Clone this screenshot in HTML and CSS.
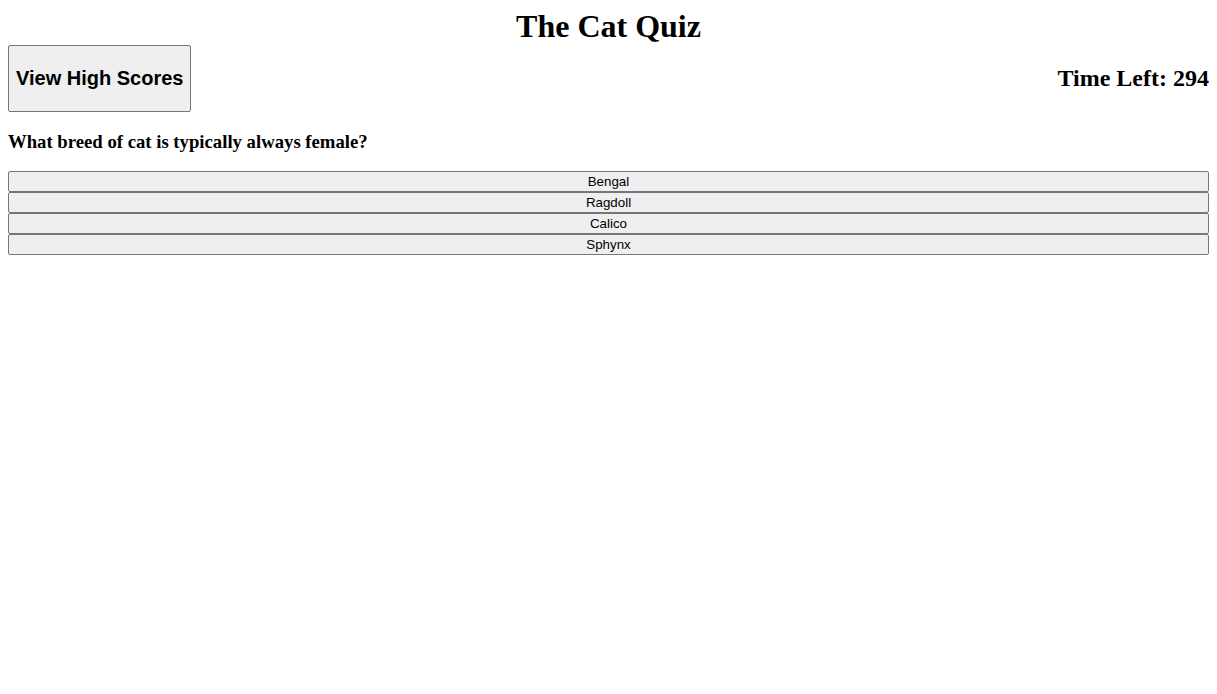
FILE: index.html
```html
<!DOCTYPE html>
<html lang="en">
<head>
<meta charset="utf-8">
<title>The Cat Quiz</title>
<link rel="stylesheet" href="styles.css">
</head>
<body>
<h1 class="title">The Cat Quiz</h1>
<div class="topbar">
  <button class="scores-btn" type="button">View High Scores</button>
  <h2 class="timer">Time Left: 294</h2>
</div>
<h3 class="question">What breed of cat is typically always female?</h3>
<div class="answers">
  <button class="answer" type="button">Bengal</button>
  <button class="answer" type="button">Ragdoll</button>
  <button class="answer" type="button">Calico</button>
  <button class="answer" type="button">Sphynx</button>
</div>
</body>
</html>
```

FILE: styles.css
```css
html, body {
  background: #ffffff;
}
body {
  margin: 8px;
  font-family: "Liberation Serif", "Times New Roman", serif;
  color: #000;
}
.title {
  margin: 0;
  font-size: 32px;
  font-weight: bold;
  text-align: center;
  line-height: 37px;
}
.topbar {
  display: flex;
  justify-content: space-between;
  align-items: center;
}
.scores-btn {
  font-family: "Liberation Sans", Arial, sans-serif;
  font-size: 20px;
  font-weight: bold;
  line-height: 23px;
  color: #000;
  background: #efefef;
  border: 1px solid #767676;
  border-radius: 2px;
  padding: 21px 7px;
  margin: 0;
}
.timer {
  margin: 0;
  font-size: 24px;
  font-weight: bold;
}
.question {
  margin: 18.72px 0;
  font-size: 18.72px;
  font-weight: bold;
}
.answers {
  display: flex;
  flex-direction: column;
}
.answer {
  display: block;
  width: 100%;
  margin: 0;
  font-family: "Liberation Sans", Arial, sans-serif;
  font-size: 13.333px;
  line-height: 15px;
  color: #000;
  background: #efefef;
  border: 1px solid #767676;
  border-radius: 2px;
  padding: 2px 6px;
  text-align: center;
}
```
